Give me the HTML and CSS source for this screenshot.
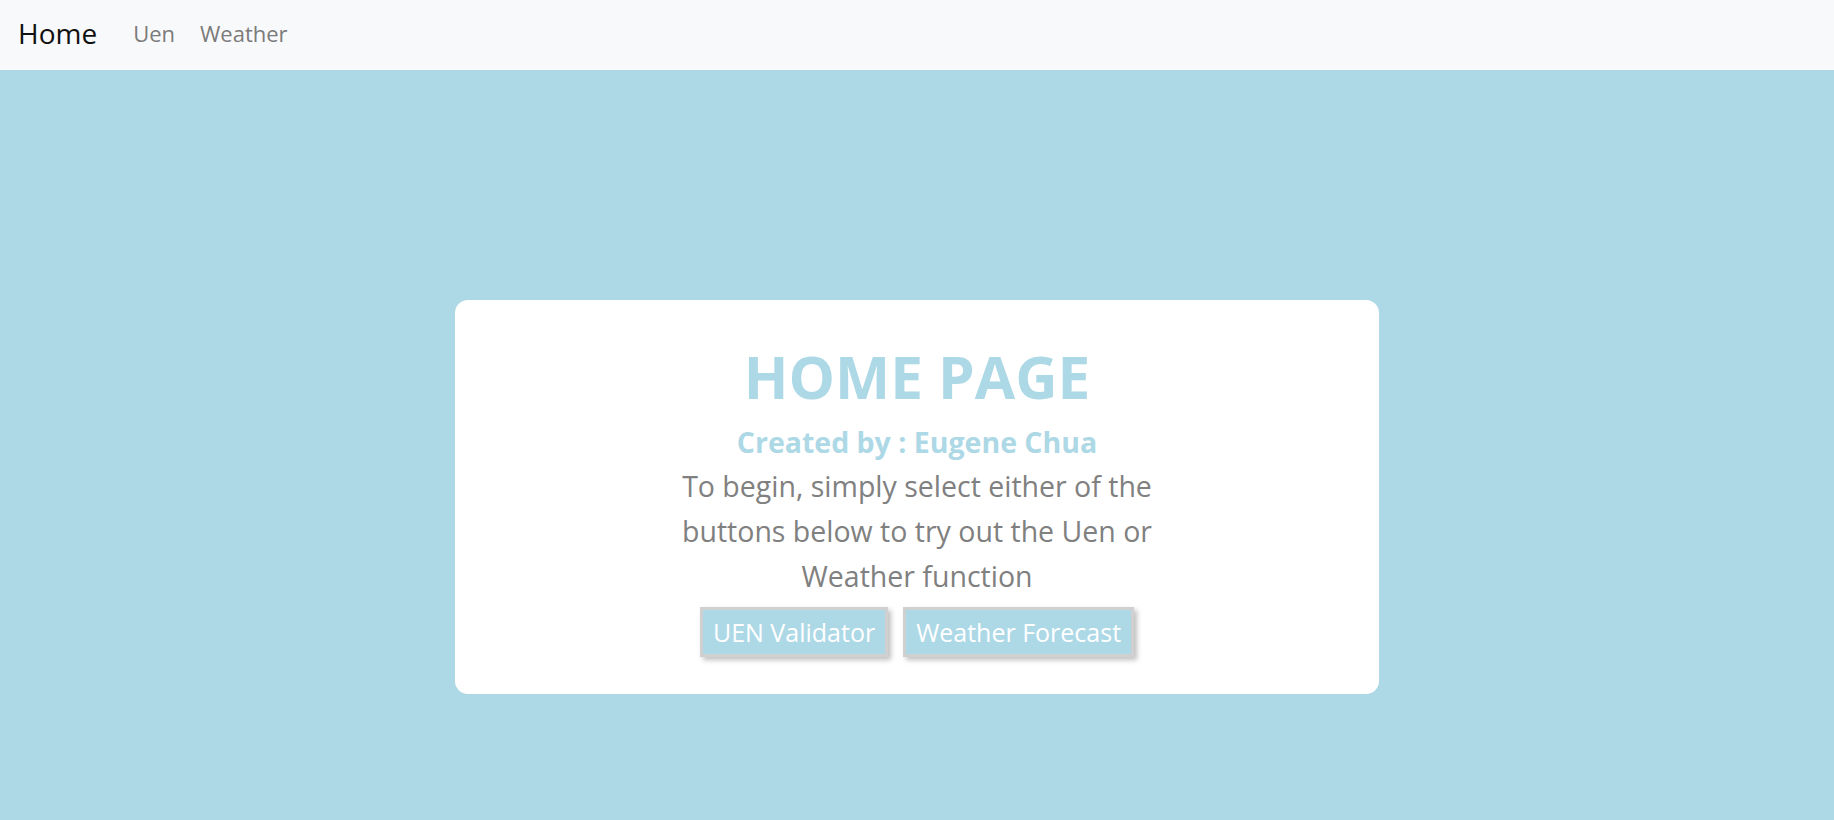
FILE: index.html
```html
<!DOCTYPE html>
<html lang="en">
<head>
<meta charset="utf-8">
<title>Home</title>
<link rel="stylesheet" href="styles.css">
</head>
<body>
<nav class="navbar">
  <a class="brand" href="#">Home</a>
  <div class="nav-links">
    <a class="nav-link" href="#">Uen</a>
    <a class="nav-link" href="#">Weather</a>
  </div>
</nav>
<main class="main">
  <section class="card">
    <h1 class="title">HOME PAGE</h1>
    <h4 class="subtitle">Created by : Eugene Chua</h4>
    <p class="intro">To begin, simply select either of the buttons below to try out the Uen or Weather function</p>
    <div class="buttons">
      <button class="btn">UEN Validator</button>
      <button class="btn">Weather Forecast</button>
    </div>
  </section>
</main>
</body>
</html>
```
FILE: styles.css
```css
* { box-sizing: border-box; }
html, body { margin: 0; padding: 0; height: 100%; }
body {
  font-family: "Open Sans", "Noto Sans", sans-serif;
  background: #add8e6;
  display: flex;
  flex-direction: column;
}
.navbar {
  height: 70px;
  background: #f8f9fa;
  display: flex;
  align-items: center;
  padding: 0 18px 4px;
  flex-shrink: 0;
}
.brand {
  font-size: 28px;
  color: #111;
  text-decoration: none;
  margin-right: 36px;
  line-height: 1;
}
.nav-links { display: flex; gap: 25px; }
.nav-link {
  font-size: 22px;
  color: #7b7b7b;
  text-decoration: none;
  line-height: 1;
}
.main {
  flex: 1;
  display: flex;
  justify-content: center;
  align-items: flex-start;
  padding-top: 230px;
}
.card {
  width: 924px;
  background: #fff;
  border-radius: 13px;
  padding: 41px 0 37px;
  display: flex;
  flex-direction: column;
  align-items: center;
  text-align: center;
}
.title {
  margin: 0;
  font-size: 58.5px;
  line-height: 1.2;
  font-weight: 700;
  color: #add8e6;
}
.subtitle {
  margin: 14px 0 0;
  font-size: 28.5px;
  line-height: 1.2;
  font-weight: 700;
  color: #add8e6;
}
.intro {
  margin: 5px 0 0;
  width: 500px;
  font-size: 28.5px;
  line-height: 45px;
  color: #808080;
}
.buttons {
  margin-top: 8px;
  display: flex;
  gap: 15px;
}
.btn {
  font-family: inherit;
  font-size: 25px;
  color: #fff;
  background: #add8e6;
  border: 3px solid #d0d0d0;
  padding: 0 10px;
  height: 50px;
  line-height: 44px;
  box-shadow: 3px 3px 5px rgba(0, 0, 0, 0.25);
  cursor: pointer;
}
```
